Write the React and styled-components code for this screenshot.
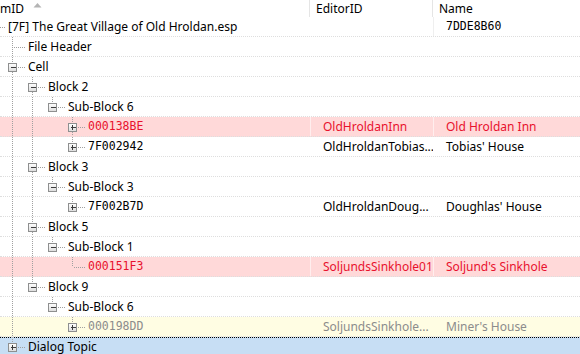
import React from 'react'
import styled, { createGlobalStyle, css } from 'styled-components'

const GlobalStyle = createGlobalStyle`
    body {
        margin: 0;
        background: #fff;
        font-family: "Noto Sans", "Open Sans", sans-serif;
        font-size: 12px;
        color: #000;
    }
`

const COLS = '310px 123px 1fr'
const ROW_H = 20

const Wrapper = styled.div`
    width: 580px;
    height: 354px;
    overflow: hidden;
    background: #fff;
`

const Header = styled.div`
    display: grid;
    grid-template-columns: ${COLS};
    height: 17px;
`

const HeaderCell = styled.div`
    display: flex;
    align-items: center;
    gap: 9px;
    padding-left: ${p => p.$pad || 0}px;
    border-right: 1px solid #e5e5e5;
    white-space: nowrap;
    overflow: hidden;
    &:last-child {
        border-right: none;
    }
`

const Arrow = styled.svg`
    align-self: flex-start;
    margin-top: 2px;
    flex-shrink: 0;
`

const variants = {
    normal: css`
        background: #fff;
        color: #000;
    `,
    root: css`
        background: #fff;
        color: #000;
    `,
    red: css`
        background: #ffd9d9;
        color: #e8112d;
    `,
    yellow: css`
        background: #fffde3;
        color: #8c8c8c;
    `,
    selected: css`
        background-color: #c7def4;
        background-image: repeating-linear-gradient(to right, #000 0 1px, transparent 1px 2px);
        background-size: 100% 1px;
        background-repeat: no-repeat;
        color: #000;
    `
}

const Row = styled.div`
    display: grid;
    grid-template-columns: ${COLS};
    height: ${ROW_H}px;
    box-sizing: border-box;
    border-bottom: 1px dotted #dedede;
    ${p => variants[p.$variant || 'normal']}
`

const TreeCell = styled.div`
    display: flex;
    align-items: flex-start;
    white-space: nowrap;
    overflow: hidden;
`

const monoFont = '"DejaVu Sans Mono", "Liberation Mono", monospace'

const Label = styled.span`
    line-height: 19px;
    font-family: ${p => p.$mono ? monoFont : 'inherit'};
    font-size: ${p => p.$mono ? '11.5px' : '12px'};
`

const DataCell = styled.div`
    padding-left: 12px;
    line-height: 19px;
    white-space: nowrap;
    overflow: hidden;
    border-left: 1px solid ${p => p.$divider || 'transparent'};
    font-family: ${p => p.$mono ? monoFont : 'inherit'};
    font-size: ${p => p.$mono ? '11.5px' : '12px'};
`

const dividers = {
    red: 'rgba(255,255,255,0.55)',
    root: '#efefef'
}

const tree = {
    text: '[7F] The Great Village of Old Hroldan.esp', name: '7DDE8B60', nameMono: true, variant: 'root',
    children: [
        { text: 'File Header' },
        {
            text: 'Cell', open: true, children: [
                {
                    text: 'Block 2', open: true, children: [
                        {
                            text: 'Sub-Block 6', open: true, children: [
                                { text: '000138BE', mono: true, closed: true, variant: 'red', editor: 'OldHroldanInn', name: "Old Hroldan Inn" },
                                { text: '7F002942', mono: true, closed: true, editor: 'OldHroldanTobias...', name: "Tobias' House" }
                            ]
                        }
                    ]
                },
                {
                    text: 'Block 3', open: true, children: [
                        {
                            text: 'Sub-Block 3', open: true, children: [
                                { text: '7F002B7D', mono: true, closed: true, editor: 'OldHroldanDoug...', name: "Doughlas' House" }
                            ]
                        }
                    ]
                },
                {
                    text: 'Block 5', open: true, children: [
                        {
                            text: 'Sub-Block 1', open: true, children: [
                                { text: '000151F3', mono: true, variant: 'red', editor: 'SoljundsSinkhole01', name: "Soljund's Sinkhole" }
                            ]
                        }
                    ]
                },
                {
                    text: 'Block 9', open: true, children: [
                        {
                            text: 'Sub-Block 6', open: true, children: [
                                { text: '000198DD', mono: true, closed: true, variant: 'yellow', editor: 'SoljundsSinkhole...', name: "Miner's House" }
                            ]
                        }
                    ]
                }
            ]
        },
        { text: 'Dialog Topic', closed: true, variant: 'selected' }
    ]
}

// walk the tree into flat rows, keeping which ancestor lines keep going
const flatten = (node, level, last, trail, out) => {
    out.push({ ...node, level, last, trail })
    const kids = node.children || []
    kids.forEach((kid, i) => {
        flatten(kid, level + 1, i === kids.length - 1, level >= 0 ? [...trail, !last] : trail, out)
    })
    return out
}

const rows = flatten(tree, -1, true, [], [])

const LINE = '#a0a0a0'

const Connectors = ({ level, last, trail, open, closed }) => {
    const width = 28 + 20 * level
    const cx = 12 + 20 * level
    const hasBox = open || closed
    return (
        <svg width={width} height={ROW_H - 1} style={{ flexShrink: 0 }}>
            <g stroke={LINE} strokeDasharray="1 1" fill="none">
                {trail.map((cont, a) => cont && (
                    <line key={a} x1={12 + 20 * a + 0.5} y1={0} x2={12 + 20 * a + 0.5} y2={20} />
                ))}
                {level >= 0 && <line x1={cx + 0.5} y1={0} x2={cx + 0.5} y2={hasBox ? 6 : 10} />}
                {level >= 0 && !last && <line x1={cx + 0.5} y1={hasBox ? 15 : 10} x2={cx + 0.5} y2={20} />}
                <line x1={hasBox ? cx + 6 : cx + 2} y1={10.5} x2={cx + 14} y2={10.5} />
            </g>
            {hasBox && (
                <g>
                    <defs>
                        <linearGradient id="boxfill" x1="0" y1="0" x2="0" y2="1">
                            <stop offset="0" stopColor="#ffffff" />
                            <stop offset="1" stopColor="#dcdcdc" />
                        </linearGradient>
                    </defs>
                    <rect x={cx - 3.5} y={6.5} width={8} height={8} fill="url(#boxfill)" stroke="#8e8f8f" />
                    <line x1={cx - 1} y1={10.5} x2={cx + 4} y2={10.5} stroke="#3b3b3b" />
                    {closed && <line x1={cx + 0.5} y1={8} x2={cx + 0.5} y2={13} stroke="#3b3b3b" />}
                </g>
            )}
        </svg>
    )
}

const SortArrow = () => (
    <Arrow width="9" height="6">
        <polygon points="0.5,5.5 4.5,1 8.5,5.5" fill="#b4b4b4" />
    </Arrow>
)

export default function App() {
    return (
        <Wrapper>
            <GlobalStyle />
            <Header>
                <HeaderCell>mID <SortArrow /></HeaderCell>
                <HeaderCell $pad={6}>EditorID</HeaderCell>
                <HeaderCell $pad={6}>Name</HeaderCell>
            </Header>
            {rows.map((r, i) => (
                <Row key={i} $variant={r.variant}>
                    <TreeCell>
                        <Connectors level={r.level} last={r.last} trail={r.trail} open={r.open} closed={r.closed} />
                        <Label $mono={r.mono}>{r.text}</Label>
                    </TreeCell>
                    <DataCell $divider={r.variant === 'red' ? dividers.red : null}>{r.editor}</DataCell>
                    <DataCell $divider={dividers[r.variant]} $mono={r.nameMono}>{r.name}</DataCell>
                </Row>
            ))}
        </Wrapper>
    )
}
